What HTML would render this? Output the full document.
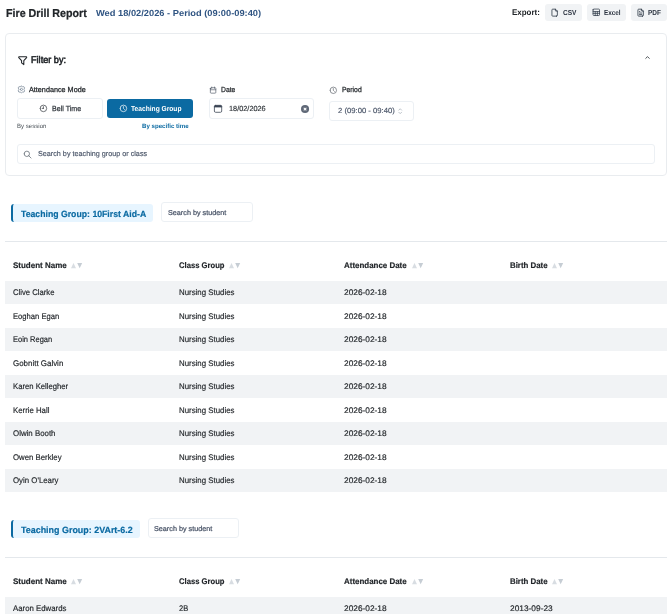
<!DOCTYPE html><html><head><meta charset="utf-8"><title>Fire Drill Report</title><style>
*{box-sizing:border-box;margin:0;padding:0}
html,body{width:670px;height:614px;overflow:hidden;background:#fff}
body{font-family:"Liberation Sans",sans-serif;color:#212529;position:relative;text-rendering:geometricPrecision}
.t{position:absolute;white-space:nowrap;line-height:1;transform-origin:0 0}
.abs{position:absolute}
#app{position:absolute;left:0;top:0;width:670px;height:614px;will-change:transform}
.card{position:absolute;border:1px solid #e9ecef;border-radius:4px;background:#fff}
.btn{position:absolute;background:#f1f3f5;border-radius:3px;top:3.9px;height:16.9px}
.inp{position:absolute;border:1px solid #ecf0f4;border-radius:3px;background:#fff}
.row{position:absolute;left:5px;width:662px;height:23.5px}
.row.g{background:#f1f3f5}
.hr{position:absolute;left:5px;width:662px;height:1px;background:#e4e8ec}
.badge{position:absolute;height:18px;background:#e7f5ff;border-left:2px solid #0b6aa2;border-radius:3px}
svg{position:absolute;overflow:visible;fill:none;stroke-linecap:round;stroke-linejoin:round}
</style></head><body><div id="app">
<div class="t" style="left:5.7px;top:9px;font-size:11.5px;font-weight:700;color:#212529;-webkit-text-stroke:0.23px #212529;transform:scaleX(0.9297)">Fire Drill Report</div>
<div class="t" style="left:95.5px;top:9px;font-size:8.8px;font-weight:700;color:#2f5482;transform:scaleX(1.0562)">Wed 18/02/2026 - Period (09:00-09:40)</div>
<div class="t" style="left:511.7px;top:9px;font-size:8.2px;font-weight:700;color:#212529;transform:scaleX(0.9736)">Export:</div>
<div class="btn" style="left:545.2px;width:37.19999999999993px"></div>
<svg style="left:550.45px;top:7.6px;width:9.3px;height:9.3px;stroke:#2f3a48;stroke-width:2.1" viewBox="0 0 24 24"><path d="M14 3v4a1 1 0 0 0 1 1h4"/><path d="M17 21h-10a2 2 0 0 1 -2 -2v-14a2 2 0 0 1 2 -2h7l5 5v11a2 2 0 0 1 -2 2z"/></svg>
<div class="t" style="left:562.8px;top:9px;font-size:7.2px;font-weight:700;color:#2b3340;transform:scaleX(0.9133)">CSV</div>
<div class="btn" style="left:586.6px;width:39.69999999999993px"></div>
<svg style="left:591.95px;top:8.15px;width:8.6px;height:8.6px;stroke:#2f3a48;stroke-width:2.1" viewBox="0 0 24 24"><path d="M3 5a2 2 0 0 1 2 -2h14a2 2 0 0 1 2 2v14a2 2 0 0 1 -2 2h-14a2 2 0 0 1 -2 -2v-14z"/><path d="M3 10h18"/><path d="M3 15h18"/><path d="M9 10v11"/><path d="M15 10v11"/></svg>
<div class="t" style="left:604px;top:9px;font-size:7.2px;font-weight:700;color:#2b3340;transform:scaleX(0.8831)">Excel</div>
<div class="btn" style="left:630.6px;width:36.60000000000002px"></div>
<svg style="left:635.5px;top:7.6px;width:9.3px;height:9.3px;stroke:#2f3a48;stroke-width:2.1" viewBox="0 0 24 24"><path d="M14 3v4a1 1 0 0 0 1 1h4"/><path d="M17 21h-10a2 2 0 0 1 -2 -2v-14a2 2 0 0 1 2 -2h7l5 5v11a2 2 0 0 1 -2 2z"/><path d="M9 9l1 0"/><path d="M9 13l6 0"/><path d="M9 17l6 0"/></svg>
<div class="t" style="left:648.3px;top:9px;font-size:7.2px;font-weight:700;color:#2b3340;transform:scaleX(0.9043)">PDF</div>
<div class="card" style="left:4.70px;top:32.50px;width:662.80px;height:143.00px;"></div>
<svg style="left:15.6px;top:53.6px;width:13.4px;height:13.4px;stroke:#212529;stroke-width:1.9" viewBox="0 0 24 24"><path d="M5.5 5h13a1 1 0 0 1 .5 1.5l-5 5.5l0 7l-4 -3l0 -4l-5 -5.5a1 1 0 0 1 .5 -1.5"/></svg>
<div class="t" style="left:31.3px;top:56px;font-size:9.8px;font-weight:400;color:#212529;-webkit-text-stroke:0.54px #212529;transform:scaleX(0.9318)">Filter by:</div>
<svg style="left:643.7px;top:54.4px;width:7px;height:7px;stroke:#343a40;stroke-width:3" viewBox="0 0 24 24"><path d="M6 15l6 -6l6 6"/></svg>
<svg style="left:16.9px;top:84.6px;width:8.8px;height:8.8px;stroke:#6f7f90;stroke-width:1.9" viewBox="0 0 24 24"><path d="M12 2.8l3.2 1.9l3.7 0l1.9 3.2l-1.9 4.1l1.9 4.1l-1.9 3.2l-3.7 0l-3.2 1.9l-3.2 -1.9l-3.7 0l-1.9 -3.2l1.9 -4.1l-1.9 -4.1l1.9 -3.2l3.7 0z"/><path d="M9 12a3 3 0 1 0 6 0a3 3 0 0 0 -6 0"/></svg>
<div class="t" style="left:29.2px;top:86px;font-size:7.3px;font-weight:400;color:#212529;-webkit-text-stroke:0.25px #212529;transform:scaleX(0.9912)">Attendance Mode</div>
<div class="inp" style="left:16.90px;top:98.20px;width:86.60px;height:20.60px;"></div>
<svg style="left:39.3px;top:104.2px;width:8.8px;height:8.8px;stroke:#343a40;stroke-width:1.9" viewBox="0 0 24 24"><path d="M3 12a9 9 0 1 0 18 0a9 9 0 0 0 -18 0"/><path d="M12 12h-3.5"/><path d="M12 7v5"/></svg>
<div class="t" style="left:51.7px;top:105px;font-size:7.3px;font-weight:400;color:#343a40;-webkit-text-stroke:0.25px #343a40;transform:scaleX(0.9728)">Bell Time</div>
<div class="abs" style="left:106.9px;top:98.5px;width:86.2px;height:19.7px;background:#0b6aa2;border-radius:3px"></div>
<svg style="left:118.5px;top:104.2px;width:8.8px;height:8.8px;stroke:#fff;stroke-width:1.9" viewBox="0 0 24 24"><path d="M3 12a9 9 0 1 0 18 0a9 9 0 0 0 -18 0"/><path d="M12 7v5l3 3"/></svg>
<div class="t" style="left:131px;top:105px;font-size:7.3px;font-weight:700;color:#fff;transform:scaleX(0.9114)">Teaching Group</div>
<div class="t" style="left:17.4px;top:124px;font-size:6.1px;font-weight:400;color:#495057;transform:scaleX(0.9977)">By session</div>
<div class="t" style="left:142.4px;top:124px;font-size:6.1px;font-weight:700;color:#0b6aa2;transform:scaleX(1.0042)">By specific time</div>
<svg style="left:208.7px;top:85.9px;width:8.2px;height:8.2px;stroke:#4a5462;stroke-width:1.9" viewBox="0 0 24 24"><path d="M4 7a2 2 0 0 1 2 -2h12a2 2 0 0 1 2 2v12a2 2 0 0 1 -2 2h-12a2 2 0 0 1 -2 -2v-12z"/><path d="M16 3v4"/><path d="M8 3v4"/><path d="M4 11h16"/></svg>
<div class="t" style="left:220.6px;top:86px;font-size:7.3px;font-weight:400;color:#212529;-webkit-text-stroke:0.25px #212529;transform:scaleX(0.9273)">Date</div>
<div class="inp" style="left:208.80px;top:98.10px;width:105.40px;height:20.70px;"></div>
<svg style="left:213.6px;top:104.9px;width:8.1px;height:7.7px" viewBox="0 0 8.1 7.7"><rect x="0.4" y="0.4" width="7.3" height="6.9" rx="1.2" fill="none" stroke="#3b4554" stroke-width="0.8"/><path d="M0.4 1.9V1.4a1 1 0 0 1 1 -1h5.3a1 1 0 0 1 1 1v0.5z" fill="#3b4554" stroke="#3b4554" stroke-width="0.5"/></svg>
<div class="t" style="left:229.2px;top:105px;font-size:7.4px;font-weight:400;color:#2b3035;-webkit-text-stroke:0.15px #2b3035;transform:scaleX(0.9919)">18/02/2026</div>
<svg style="left:301.1px;top:104.5px;width:8.1px;height:8.1px" viewBox="0 0 24 24"><circle cx="12" cy="12" r="12" fill="#5f6877"/><path d="M9 9l6 6M15 9l-6 6" stroke="#fff" stroke-width="3"/></svg>
<svg style="left:328.9px;top:85.9px;width:8.6px;height:8.6px;stroke:#495057;stroke-width:1.7" viewBox="0 0 24 24"><path d="M3 12a9 9 0 1 0 18 0a9 9 0 0 0 -18 0"/><path d="M12 7v5l3 3"/></svg>
<div class="t" style="left:341.9px;top:86px;font-size:7.3px;font-weight:400;color:#212529;-webkit-text-stroke:0.25px #212529;transform:scaleX(0.9339)">Period</div>
<div class="inp" style="left:328.80px;top:100.50px;width:84.80px;height:20.30px;"></div>
<div class="t" style="left:337.9px;top:107px;font-size:7.4px;font-weight:400;color:#4a5568;-webkit-text-stroke:0.15px #4a5568;transform:scaleX(1.0392)">2 (09:00 - 09:40)</div>
<svg style="left:396.15px;top:106.65px;width:8.4px;height:8.4px;stroke:#a9b1ba;stroke-width:2.2" viewBox="0 0 24 24"><path d="M8 9l4 -4l4 4"/><path d="M16 15l-4 4l-4 -4"/></svg>
<div class="inp" style="left:16.80px;top:143.50px;width:638.70px;height:20.40px;"></div>
<svg style="left:23.2px;top:149.5px;width:9.2px;height:9.2px;stroke:#4f5963;stroke-width:1.8" viewBox="0 0 24 24"><path d="M3 10a7 7 0 1 0 14 0a7 7 0 1 0 -14 0"/><path d="M21 21l-6 -6"/></svg>
<div class="t" style="left:37.6px;top:150px;font-size:7.3px;font-weight:400;color:#4a5568;-webkit-text-stroke:0.15px #4a5568;transform:scaleX(0.9889)">Search by teaching group or class</div>
<div class="badge" style="left:10.7px;top:204.0px;width:142.6px"></div>
<div class="t" style="left:20.8px;top:210px;font-size:9.1px;font-weight:700;color:#0b6aa2;-webkit-text-stroke:0.18px #0b6aa2;transform:scaleX(0.9568)">Teaching Group: 10First Aid-A</div>
<div class="inp" style="left:161.40px;top:201.70px;width:91.90px;height:20.50px;"></div>
<div class="t" style="left:168.3px;top:210px;font-size:7.1px;font-weight:400;color:#4a5568;-webkit-text-stroke:0.24px #4a5568;transform:scaleX(1.0195)">Search by student</div>
<div class="hr" style="top:241.29999999999998px"></div>
<div class="t" style="left:12.9px;top:262px;font-size:8.15px;font-weight:700;color:#212529;-webkit-text-stroke:0.16px #212529;transform:scaleX(0.9828)">Student Name</div>
<svg style="left:71.19999999999999px;top:262.79999999999995px;width:11.2px;height:5.2px" viewBox="0 0 11.2 5.2"><path d="M0 5.2L2.5 0L5 5.2z" fill="#d8dde2"/><path d="M6.2 0L11.2 0L8.7 5.2z" fill="#c6cdd4"/></svg>
<div class="t" style="left:178.6px;top:262px;font-size:8.15px;font-weight:700;color:#212529;-webkit-text-stroke:0.16px #212529;transform:scaleX(0.9418)">Class Group</div>
<svg style="left:228.7px;top:262.79999999999995px;width:11.2px;height:5.2px" viewBox="0 0 11.2 5.2"><path d="M0 5.2L2.5 0L5 5.2z" fill="#d8dde2"/><path d="M6.2 0L11.2 0L8.7 5.2z" fill="#c6cdd4"/></svg>
<div class="t" style="left:344.3px;top:262px;font-size:8.15px;font-weight:700;color:#212529;-webkit-text-stroke:0.16px #212529;transform:scaleX(0.9778)">Attendance Date</div>
<svg style="left:411.6px;top:262.79999999999995px;width:11.2px;height:5.2px" viewBox="0 0 11.2 5.2"><path d="M0 5.2L2.5 0L5 5.2z" fill="#d8dde2"/><path d="M6.2 0L11.2 0L8.7 5.2z" fill="#c6cdd4"/></svg>
<div class="t" style="left:509.9px;top:262px;font-size:8.15px;font-weight:700;color:#212529;-webkit-text-stroke:0.16px #212529;transform:scaleX(0.9684)">Birth Date</div>
<svg style="left:552.1px;top:262.79999999999995px;width:11.2px;height:5.2px" viewBox="0 0 11.2 5.2"><path d="M0 5.2L2.5 0L5 5.2z" fill="#d8dde2"/><path d="M6.2 0L11.2 0L8.7 5.2z" fill="#c6cdd4"/></svg>
<div class="row g" style="top:280.7px"></div>
<div class="t" style="left:12.9px;top:289px;font-size:8.15px;font-weight:400;color:#212529;-webkit-text-stroke:0.16px #212529;transform:scaleX(0.9476)">Clive Clarke</div>
<div class="t" style="left:178.6px;top:289px;font-size:8.15px;font-weight:400;color:#212529;-webkit-text-stroke:0.16px #212529;transform:scaleX(0.9676)">Nursing Studies</div>
<div class="t" style="left:344.3px;top:289px;font-size:8.15px;font-weight:400;color:#212529;-webkit-text-stroke:0.16px #212529;transform:scaleX(1.0250)">2026-02-18</div>
<div class="row" style="top:304.2px"></div>
<div class="t" style="left:12.9px;top:313px;font-size:8.15px;font-weight:400;color:#212529;-webkit-text-stroke:0.16px #212529;transform:scaleX(0.9381)">Eoghan Egan</div>
<div class="t" style="left:178.6px;top:313px;font-size:8.15px;font-weight:400;color:#212529;-webkit-text-stroke:0.16px #212529;transform:scaleX(0.9676)">Nursing Studies</div>
<div class="t" style="left:344.3px;top:313px;font-size:8.15px;font-weight:400;color:#212529;-webkit-text-stroke:0.16px #212529;transform:scaleX(1.0250)">2026-02-18</div>
<div class="row g" style="top:327.7px"></div>
<div class="t" style="left:12.9px;top:336px;font-size:8.15px;font-weight:400;color:#212529;-webkit-text-stroke:0.16px #212529;transform:scaleX(0.9230)">Eoin Regan</div>
<div class="t" style="left:178.6px;top:336px;font-size:8.15px;font-weight:400;color:#212529;-webkit-text-stroke:0.16px #212529;transform:scaleX(0.9676)">Nursing Studies</div>
<div class="t" style="left:344.3px;top:336px;font-size:8.15px;font-weight:400;color:#212529;-webkit-text-stroke:0.16px #212529;transform:scaleX(1.0250)">2026-02-18</div>
<div class="row" style="top:351.2px"></div>
<div class="t" style="left:12.9px;top:360px;font-size:8.15px;font-weight:400;color:#212529;-webkit-text-stroke:0.16px #212529;transform:scaleX(0.9770)">Gobnitt Galvin</div>
<div class="t" style="left:178.6px;top:360px;font-size:8.15px;font-weight:400;color:#212529;-webkit-text-stroke:0.16px #212529;transform:scaleX(0.9676)">Nursing Studies</div>
<div class="t" style="left:344.3px;top:360px;font-size:8.15px;font-weight:400;color:#212529;-webkit-text-stroke:0.16px #212529;transform:scaleX(1.0250)">2026-02-18</div>
<div class="row g" style="top:374.7px"></div>
<div class="t" style="left:12.9px;top:383px;font-size:8.15px;font-weight:400;color:#212529;-webkit-text-stroke:0.16px #212529;transform:scaleX(0.9471)">Karen Kellegher</div>
<div class="t" style="left:178.6px;top:383px;font-size:8.15px;font-weight:400;color:#212529;-webkit-text-stroke:0.16px #212529;transform:scaleX(0.9676)">Nursing Studies</div>
<div class="t" style="left:344.3px;top:383px;font-size:8.15px;font-weight:400;color:#212529;-webkit-text-stroke:0.16px #212529;transform:scaleX(1.0250)">2026-02-18</div>
<div class="row" style="top:398.2px"></div>
<div class="t" style="left:12.9px;top:407px;font-size:8.15px;font-weight:400;color:#212529;-webkit-text-stroke:0.16px #212529;transform:scaleX(0.9595)">Kerrie Hall</div>
<div class="t" style="left:178.6px;top:407px;font-size:8.15px;font-weight:400;color:#212529;-webkit-text-stroke:0.16px #212529;transform:scaleX(0.9676)">Nursing Studies</div>
<div class="t" style="left:344.3px;top:407px;font-size:8.15px;font-weight:400;color:#212529;-webkit-text-stroke:0.16px #212529;transform:scaleX(1.0250)">2026-02-18</div>
<div class="row g" style="top:421.7px"></div>
<div class="t" style="left:12.9px;top:430px;font-size:8.15px;font-weight:400;color:#212529;-webkit-text-stroke:0.16px #212529;transform:scaleX(0.9700)">Olwin Booth</div>
<div class="t" style="left:178.6px;top:430px;font-size:8.15px;font-weight:400;color:#212529;-webkit-text-stroke:0.16px #212529;transform:scaleX(0.9676)">Nursing Studies</div>
<div class="t" style="left:344.3px;top:430px;font-size:8.15px;font-weight:400;color:#212529;-webkit-text-stroke:0.16px #212529;transform:scaleX(1.0250)">2026-02-18</div>
<div class="row" style="top:445.2px"></div>
<div class="t" style="left:12.9px;top:454px;font-size:8.15px;font-weight:400;color:#212529;-webkit-text-stroke:0.16px #212529;transform:scaleX(0.9609)">Owen Berkley</div>
<div class="t" style="left:178.6px;top:454px;font-size:8.15px;font-weight:400;color:#212529;-webkit-text-stroke:0.16px #212529;transform:scaleX(0.9676)">Nursing Studies</div>
<div class="t" style="left:344.3px;top:454px;font-size:8.15px;font-weight:400;color:#212529;-webkit-text-stroke:0.16px #212529;transform:scaleX(1.0250)">2026-02-18</div>
<div class="row g" style="top:468.7px"></div>
<div class="t" style="left:12.9px;top:477px;font-size:8.15px;font-weight:400;color:#212529;-webkit-text-stroke:0.16px #212529;transform:scaleX(0.9646)">Oyin O'Leary</div>
<div class="t" style="left:178.6px;top:477px;font-size:8.15px;font-weight:400;color:#212529;-webkit-text-stroke:0.16px #212529;transform:scaleX(0.9676)">Nursing Studies</div>
<div class="t" style="left:344.3px;top:477px;font-size:8.15px;font-weight:400;color:#212529;-webkit-text-stroke:0.16px #212529;transform:scaleX(1.0250)">2026-02-18</div>
<div class="badge" style="left:10.7px;top:520.0px;width:129.5px"></div>
<div class="t" style="left:20.8px;top:526px;font-size:9.1px;font-weight:700;color:#0b6aa2;-webkit-text-stroke:0.18px #0b6aa2;transform:scaleX(0.9810)">Teaching Group: 2VArt-6.2</div>
<div class="inp" style="left:147.50px;top:517.70px;width:91.90px;height:20.50px;"></div>
<div class="t" style="left:154.4px;top:526px;font-size:7.1px;font-weight:400;color:#4a5568;-webkit-text-stroke:0.24px #4a5568;transform:scaleX(1.0195)">Search by student</div>
<div class="hr" style="top:557.3000000000001px"></div>
<div class="t" style="left:12.9px;top:578px;font-size:8.15px;font-weight:700;color:#212529;-webkit-text-stroke:0.16px #212529;transform:scaleX(0.9828)">Student Name</div>
<svg style="left:71.19999999999999px;top:578.8000000000001px;width:11.2px;height:5.2px" viewBox="0 0 11.2 5.2"><path d="M0 5.2L2.5 0L5 5.2z" fill="#d8dde2"/><path d="M6.2 0L11.2 0L8.7 5.2z" fill="#c6cdd4"/></svg>
<div class="t" style="left:178.6px;top:578px;font-size:8.15px;font-weight:700;color:#212529;-webkit-text-stroke:0.16px #212529;transform:scaleX(0.9418)">Class Group</div>
<svg style="left:228.7px;top:578.8000000000001px;width:11.2px;height:5.2px" viewBox="0 0 11.2 5.2"><path d="M0 5.2L2.5 0L5 5.2z" fill="#d8dde2"/><path d="M6.2 0L11.2 0L8.7 5.2z" fill="#c6cdd4"/></svg>
<div class="t" style="left:344.3px;top:578px;font-size:8.15px;font-weight:700;color:#212529;-webkit-text-stroke:0.16px #212529;transform:scaleX(0.9778)">Attendance Date</div>
<svg style="left:411.6px;top:578.8000000000001px;width:11.2px;height:5.2px" viewBox="0 0 11.2 5.2"><path d="M0 5.2L2.5 0L5 5.2z" fill="#d8dde2"/><path d="M6.2 0L11.2 0L8.7 5.2z" fill="#c6cdd4"/></svg>
<div class="t" style="left:509.9px;top:578px;font-size:8.15px;font-weight:700;color:#212529;-webkit-text-stroke:0.16px #212529;transform:scaleX(0.9684)">Birth Date</div>
<svg style="left:552.1px;top:578.8000000000001px;width:11.2px;height:5.2px" viewBox="0 0 11.2 5.2"><path d="M0 5.2L2.5 0L5 5.2z" fill="#d8dde2"/><path d="M6.2 0L11.2 0L8.7 5.2z" fill="#c6cdd4"/></svg>
<div class="row g" style="top:596.7px"></div>
<div class="t" style="left:12.9px;top:605px;font-size:8.15px;font-weight:400;color:#212529;-webkit-text-stroke:0.16px #212529;transform:scaleX(0.9611)">Aaron Edwards</div>
<div class="t" style="left:178.6px;top:605px;font-size:8.15px;font-weight:400;color:#212529;-webkit-text-stroke:0.16px #212529;transform:scaleX(0.9243)">2B</div>
<div class="t" style="left:344.3px;top:605px;font-size:8.15px;font-weight:400;color:#212529;-webkit-text-stroke:0.16px #212529;transform:scaleX(1.0250)">2026-02-18</div>
<div class="t" style="left:509.9px;top:605px;font-size:8.15px;font-weight:400;color:#212529;-webkit-text-stroke:0.16px #212529;transform:scaleX(1.0274)">2013-09-23</div>
</div></body></html>
